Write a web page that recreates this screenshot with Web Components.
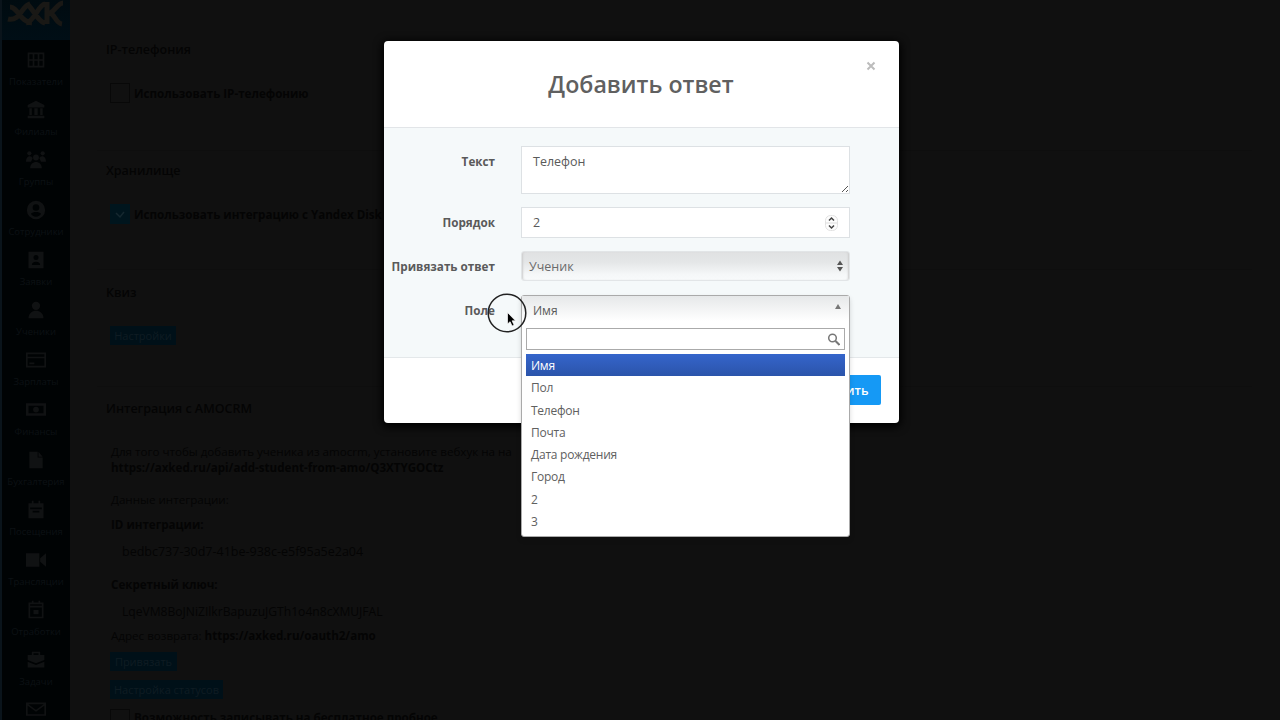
<!DOCTYPE html>
<html lang="ru">
<head>
<meta charset="utf-8">
<title>Добавить ответ</title>
<style>
  body {
    margin: 0;
    width: 1280px;
    height: 720px;
    overflow: hidden;
    background: #101010;
    font-family: "Open Sans", "Noto Sans", sans-serif;
  }
  .page {
    display: flex;
    height: 720px;
    overflow: hidden;
  }
</style>
</head>
<body>
<div class="page">
  <app-sidebar></app-sidebar>
  <settings-page></settings-page>
</div>

<modal-dialog heading="Добавить ответ">
  <form-field label="Текст" style="height: 47px; margin-bottom: 14px">
    <text-area>Телефон</text-area>
  </form-field>
  <form-field label="Порядок" style="height: 31px; margin-bottom: 13px">
    <number-input>2</number-input>
  </form-field>
  <form-field label="Привязать ответ" style="height: 30px; margin-bottom: 14px">
    <select-box>Ученик</select-box>
  </form-field>
  <form-field label="Поле" style="height: 30px">
    <chosen-select selected="Имя" options="Имя|Пол|Телефон|Почта|Дата рождения|Город|2|3"></chosen-select>
  </form-field>
  <span slot="action">Сохранить</span>
</modal-dialog>

<pointer-mark></pointer-mark>

<script>
class AppSidebar extends HTMLElement {
  connectedCallback() {
    const items = [
      ['Показатели', '<path d="M3 4h18v16H3zM3 12h18M9 4v16M15 4v16" fill="none" stroke="currentColor" stroke-width="2"/>'],
      ['Филиалы', '<path d="M12 1 2 6v3h20V6zM4 10h3v8H4zM10 10h4v8h-4zM17 10h3v8h-3zM2 19h20v3H2z"/>'],
      ['Группы', '<circle cx="4" cy="4" r="2.500"/><circle cx="20" cy="4" r="2.500"/><circle cx="12" cy="9" r="3.500"/><path d="M0 14c0-8 7-8 8-4l-2 4H0zM24 14c0-8-7-8-8-4l2 4h6zM5 22c0-10 14-10 14 0z"/>'],
      ['Сотрудники', '<path fill-rule="evenodd" d="M12 1a11 11 0 1 0 0 22 11 11 0 0 0 0-22zm0 4a4 4 0 1 1 0 8 4 4 0 0 1 0-8zm0 15c-3 0-5-1.500-6-3.500 2-3 10-3 12 0-1 2-3 3.500-6 3.500z"/>'],
      ['Заявки', '<path fill-rule="evenodd" d="M3 2h18v20H3zM12 6a3 3 0 1 0 0 6 3 3 0 0 0 0-6zm-5 12h10c0-5-10-5-10 0z"/>'],
      ['Ученики', '<circle cx="12" cy="7" r="5"/><path d="M3 22c0-12 18-12 18 0z"/>'],
      ['Зарплаты', '<path d="M1 4h22v16H1zM1 9h22M4 16h6" fill="none" stroke="currentColor" stroke-width="2"/>'],
      ['Финансы', '<path fill-rule="evenodd" d="M0 4h24v15H0zM3 7v9h18V7zm9 1a3.500 3.500 0 1 1 0 7 3.500 3.500 0 0 1 0-7z"/>'],
      ['Бухгалтерия', '<path d="M4 2h10v7h6v13H4zM15 2l5 6h-5z"/>'],
      ['Посещения', '<path fill-rule="evenodd" d="M3 4h4V1h2v3h6V1h2v3h4v18H3zM5 9v2h14V9zm3 4v2h8v-2z"/>'],
      ['Трансляции', '<path d="M0 4h16v16H0zM17 10l7-6v16l-7-6z"/>'],
      ['Отработки', '<path d="M4 4h16v17H4zM4 8h16M8 1v4M16 1v4" fill="none" stroke="currentColor" stroke-width="2"/><path d="M9 12h6v5H9z"/>'],
      ['Задачи', '<path fill-rule="evenodd" d="M7 2h10v4h5v6l-10 4-10-4V6h5zm2 2v2h6V4zM2 14l10 4 10-4v7H2z"/>'],
      ['', '<path d="M1 4h22v14H1zM1 5l11 8 11-8" fill="none" stroke="currentColor" stroke-width="2"/>']
    ];
    this.attachShadow({ mode: 'open' });
    this.shadowRoot.innerHTML = `
      <style>
        :host {
          display: block;
          box-sizing: border-box;
          flex: none;
          width: 70px;
          height: 720px;
          overflow: hidden;
          background: #000304;
          border-left: 2px solid #0a141b;
        }
        .logo {
          display: flex;
          justify-content: center;
          height: 40px;
          background: linear-gradient(#000b10, #000e16);
        }
        .item {
          display: flex;
          flex-direction: column;
          align-items: center;
          height: 50px;
          padding-top: 10px;
          box-sizing: border-box;
          color: #101213;
        }
        .item svg { fill: currentColor; flex: none; }
        .item span {
          margin-top: 5px;
          font-size: 9.5px;
          line-height: 14px;
          color: #0c1114;
          white-space: nowrap;
        }
      </style>
      <div class="logo">
        <svg width="58" height="28" viewBox="0 0 58 28" fill="none" stroke="#191815" stroke-width="5">
          <path d="M3 7c8 0 10 15 22 16M1 19c12 3 14-14 22-15M20 4c5 3 11 18 18 19M19 23C28 21 31 5 38 4M40 2v22M56 3C50 3 47 14 40 14M42 13c6 0 6 10 13 11"/>
        </svg>
      </div>
      ${items.map(([name, icon]) => `
        <div class="item">
          <svg width="20" height="20" viewBox="0 0 24 24">${icon}</svg>
          ${name ? `<span>${name}</span>` : ''}
        </div>`).join('')}
    `;
  }
}

class SettingsPage extends HTMLElement {
  connectedCallback() {
    this.attachShadow({ mode: 'open' });
    this.shadowRoot.innerHTML = `
      <style>
        :host {
          display: block;
          flex: 1;
          height: 720px;
          overflow: hidden;
          color: #040404;
          font-size: 11.600px;
        }
        section {
          box-sizing: border-box;
          margin: 0 28px 0 27px;
          padding: 11px 0 0 13px;
          border-bottom: 1px solid #0e0e0e;
        }
        h2 {
          margin: 0 0 24px -4px;
          font-size: 12.500px;
          font-weight: 600;
          line-height: 18px;
        }
        .row {
          height: 18px;
          padding-left: 1px;
          line-height: 18px;
          white-space: nowrap;
        }
        .check {
          display: flex;
          align-items: center;
          gap: 4px;
          height: 20px;
          font-size: 11.600px;
          font-weight: 700;
          white-space: nowrap;
        }
        .box {
          box-sizing: border-box;
          width: 20px;
          height: 20px;
          border: 1px solid #080808;
        }
        .box.on {
          background: #00151d;
          border-color: #00151d;
        }
        .box svg { display: block; }
        .btn {
          display: flex;
          align-items: center;
          justify-content: center;
          height: 19px;
          background: #001018;
          color: #0f1c23;
          font-size: 11px;
        }
        .row.value { padding-left: 12px; }
      </style>
      <section style="height: 119px; margin-top: 32px; padding-top: 9px">
        <h2>IP-телефония</h2>
        <div class="check"><div class="box"></div>Использовать IP-телефонию</div>
      </section>
      <section style="height: 119px">
        <h2>Хранилище</h2>
        <div class="check">
          <div class="box on"><svg width="18" height="18" viewBox="0 0 18 18"><path d="M5 8l4 4 4-5" fill="none" stroke="#15282f" stroke-width="1.500"/></svg></div>
          Использовать интеграцию с Yandex Disk
        </div>
      </section>
      <section style="height: 117px; padding-top: 14px">
        <h2>Квиз</h2>
        <div class="btn" style="width: 66px">Настройки</div>
      </section>
      <section style="height: 345px; padding-top: 13px">
        <h2>Интеграция с AMOCRM</h2>
        <div class="row" style="height: 16px; line-height: 16px; padding-top: 2px">Для того чтобы добавить ученика из amocrm, установите вебхук на на</div>
        <div class="row" style="height: 31px; line-height: 16px"><b>https://axked.ru/api/add-student-from-amo/Q3XTYGOCtz</b></div>
        <div class="row" style="height: 25px">Данные интеграции:</div>
        <div class="row" style="height: 27px"><b>ID интеграции:</b></div>
        <div class="row value" style="height: 33px; font-size: 12.500px">bedbc737-30d7-41be-938c-e5f95a5e2a04</div>
        <div class="row" style="height: 27px"><b>Секретный ключ:</b></div>
        <div class="row value" style="height: 24px; font-size: 12.100px">LqeVM8BoJNiZIlkrBapuzuJGTh1o4n8cXMUJFAL</div>
        <div class="row" style="height: 25px">Адрес возврата: <b>https://axked.ru/oauth2/amo</b></div>
        <div class="btn" style="width: 67px; margin-bottom: 9px">Привязать</div>
        <div class="btn" style="width: 113px; margin-bottom: 10px">Настройка статусов</div>
        <div class="check" style="align-items: flex-start; line-height: 17px"><div class="box"></div>Возможность записывать на бесплатное пробное</div>
      </section>
    `;
  }
}

class ModalDialog extends HTMLElement {
  connectedCallback() {
    this.attachShadow({ mode: 'open' });
    this.shadowRoot.innerHTML = `
      <style>
        :host {
          position: absolute;
          inset: 0;
          display: flex;
          justify-content: center;
          align-items: flex-start;
        }
        .dialog {
          width: 515px;
          margin: 41px 0 0 2px;
          border-radius: 4px;
          background: #fff;
          box-shadow: 0 2px 8px 2px #000;
          color: #5a5a5a;
        }
        header {
          display: grid;
          grid-template-columns: 60px 1fr 60px;
          height: 86px;
        }
        h1 {
          grid-column: 2;
          margin: 0;
          font-size: 23.200px;
          font-weight: 600;
          line-height: 87px;
          text-align: center;
          color: #606060;
        }
        header svg { margin: 20px 0 0 27px; }
        .body {
          position: relative;
          z-index: 1;
          box-sizing: border-box;
          height: 231px;
          padding-top: 18px;
          background: #f5f9fa;
          border-top: 1px solid #e2e5e8;
          border-bottom: 1px solid #e4e8ea;
        }
        footer {
          display: flex;
          justify-content: flex-end;
          padding: 17px 18px 18px;
        }
        .save {
          height: 30px;
          padding: 0 12px;
          border-radius: 2px;
          background: #1599f5;
          color: #fff;
          font-size: 12.500px;
          font-weight: 600;
          line-height: 31px;
        }
      </style>
      <div class="dialog">
        <header>
          <h1>${this.getAttribute('heading')}</h1>
          <svg width="10" height="10" viewBox="0 0 10 10"><path d="M1.500 1.500l7 7M8.500 1.500l-7 7" stroke="#bcbcbc" stroke-width="2"/></svg>
        </header>
        <div class="body"><slot></slot></div>
        <footer><div class="save"><slot name="action"></slot></div></footer>
      </div>
    `;
  }
}

class FormField extends HTMLElement {
  connectedCallback() {
    this.attachShadow({ mode: 'open' });
    this.shadowRoot.innerHTML = `
      <style>
        :host {
          display: flex;
          font-size: 12.500px;
        }
        label {
          flex: none;
          width: 111.500px;
          margin-right: 26px;
          font-size: 11.700px;
          font-weight: 700;
          line-height: 30px;
          text-align: right;
          white-space: nowrap;
        }
        ::slotted(*) {
          flex: none;
          box-sizing: border-box;
          width: 329px;
        }
      </style>
      <label>${this.getAttribute('label')}</label>
      <slot></slot>
    `;
  }
}

class TextArea extends HTMLElement {
  connectedCallback() {
    this.attachShadow({ mode: 'open' });
    this.shadowRoot.innerHTML = `
      <style>
        :host {
          display: flex;
          justify-content: space-between;
          align-items: flex-end;
          height: 48px;
          padding-left: 11px;
          border: 1px solid #dde1e4;
          background: #fff;
        }
        div { align-self: flex-start; line-height: 29px; }
      </style>
      <div><slot></slot></div>
      <svg width="8" height="8" viewBox="0 0 8 8"><path d="M1 7l6-6M5 7l2-2" stroke="#555"/></svg>
    `;
  }
}

class NumberInput extends HTMLElement {
  connectedCallback() {
    this.attachShadow({ mode: 'open' });
    this.shadowRoot.innerHTML = `
      <style>
        :host {
          display: flex;
          justify-content: space-between;
          align-items: center;
          height: 31px;
          padding: 0 11px;
          border: 1px solid #dde1e4;
          background: #fff;
        }
      </style>
      <div><slot></slot></div>
      <svg width="13" height="18" viewBox="0 0 13 18" fill="none">
        <rect x=".5" y="1.500" width="12" height="15" rx="5" fill="#fdfdfd" stroke="#e2e2e2"/>
        <path d="M1 9h11" stroke="#ddd"/>
        <path d="M4 6.500l2.500-2.500L9 6.500M4 11.500l2.500 2.500L9 11.500" stroke="#444" stroke-width="1.500"/>
      </svg>
    `;
  }
}

class SelectBox extends HTMLElement {
  connectedCallback() {
    this.attachShadow({ mode: 'open' });
    this.shadowRoot.innerHTML = `
      <style>
        :host {
          display: flex;
          justify-content: space-between;
          align-items: center;
          height: 30px;
          padding: 0 6px 0 7px;
          border: 1px solid #e2e5e7;
          border-radius: 3px;
          background: linear-gradient(#e0e1e2, #e4e6e7 35%, #f5f7f8 80%, #f8fafb);
          box-shadow: inset 2px 0 2px -1px #ccc, inset -2px 0 2px -1px #ccc;
          color: #6a6a6a;
        }
      </style>
      <div><slot></slot></div>
      <svg width="6" height="12" viewBox="0 0 6 12" fill="#555"><path d="M0 5l3-4.500 3 4.500zM0 7l3 4.500 3-4.500z"/></svg>
    `;
  }
}

class ChosenSelect extends HTMLElement {
  connectedCallback() {
    const selected = this.getAttribute('selected');
    const options = this.getAttribute('options').split('|');
    this.attachShadow({ mode: 'open' });
    this.shadowRoot.innerHTML = `
      <style>
        :host {
          display: block;
          position: relative;
          height: 30px;
        }
        /* opens over the dialog footer */
        .menu {
          position: absolute;
          top: 0;
          left: 0;
          box-sizing: border-box;
          width: 329px;
          height: 242px;
          border: 1px solid #aaa;
          border-radius: 3px;
          background: #fff;
          box-shadow: 0 3px 5px rgba(0, 0, 0, .15);
        }
        .single {
          display: flex;
          justify-content: space-between;
          height: 28px;
          padding: 0 8px 0 11px;
          font-size: 12px;
          line-height: 29px;
          background: linear-gradient(#e6e8e9, #fff 90%);
        }
        .single svg { margin-top: 8px; }
        .search {
          display: flex;
          justify-content: flex-end;
          align-items: center;
          box-sizing: border-box;
          height: 22px;
          margin: 4px 4px 4px;
          padding-right: 4px;
          border: 1px solid #aaa;
        }
        .option {
          box-sizing: border-box;
          height: 22.300px;
          margin: 0 4px;
          padding-left: 5px;
          font-size: 12px;
          letter-spacing: -.25px;
          line-height: 23.500px;
          color: #606060;
        }
        .option.on {
          background: linear-gradient(#3565cb, #2b54aa);
          color: #fff;
        }
      </style>
      <div class="menu">
        <div class="single">
          <div>${selected}</div>
          <svg width="6" height="5" viewBox="0 0 6 5"><path d="M0 5l3-5 3 5z" fill="#777"/></svg>
        </div>
        <div class="search">
          <svg width="13" height="13" viewBox="0 0 13 13" fill="none" stroke="#777"><circle cx="5.500" cy="5" r="3.800" stroke-width="1.500"/><path d="M8.500 8l4 4" stroke-width="2"/></svg>
        </div>
        ${options.map((o) => `<div class="option${o === selected ? ' on' : ''}">${o}</div>`).join('')}
      </div>
    `;
  }
}

class PointerMark extends HTMLElement {
  connectedCallback() {
    this.attachShadow({ mode: 'open' });
    this.shadowRoot.innerHTML = `
      <style>
        :host {
          position: absolute;
          left: 487px;
          top: 293px;
          z-index: 5;
        }
        svg { display: block; }
      </style>
      <svg width="40" height="40" viewBox="0 0 40 40">
        <circle cx="20" cy="20" r="18.800" fill="none" stroke="#222" stroke-width="1.500"/>
        <path d="M20.500 19.500v11.500l2.600-2.300 2 4.300 2-1-2-4.200h3.400z" fill="#000" stroke="#fff" stroke-width=".7"/>
      </svg>
    `;
  }
}

customElements.define('app-sidebar', AppSidebar);
customElements.define('settings-page', SettingsPage);
customElements.define('modal-dialog', ModalDialog);
customElements.define('form-field', FormField);
customElements.define('text-area', TextArea);
customElements.define('number-input', NumberInput);
customElements.define('select-box', SelectBox);
customElements.define('chosen-select', ChosenSelect);
customElements.define('pointer-mark', PointerMark);
</script>
</body>
</html>
